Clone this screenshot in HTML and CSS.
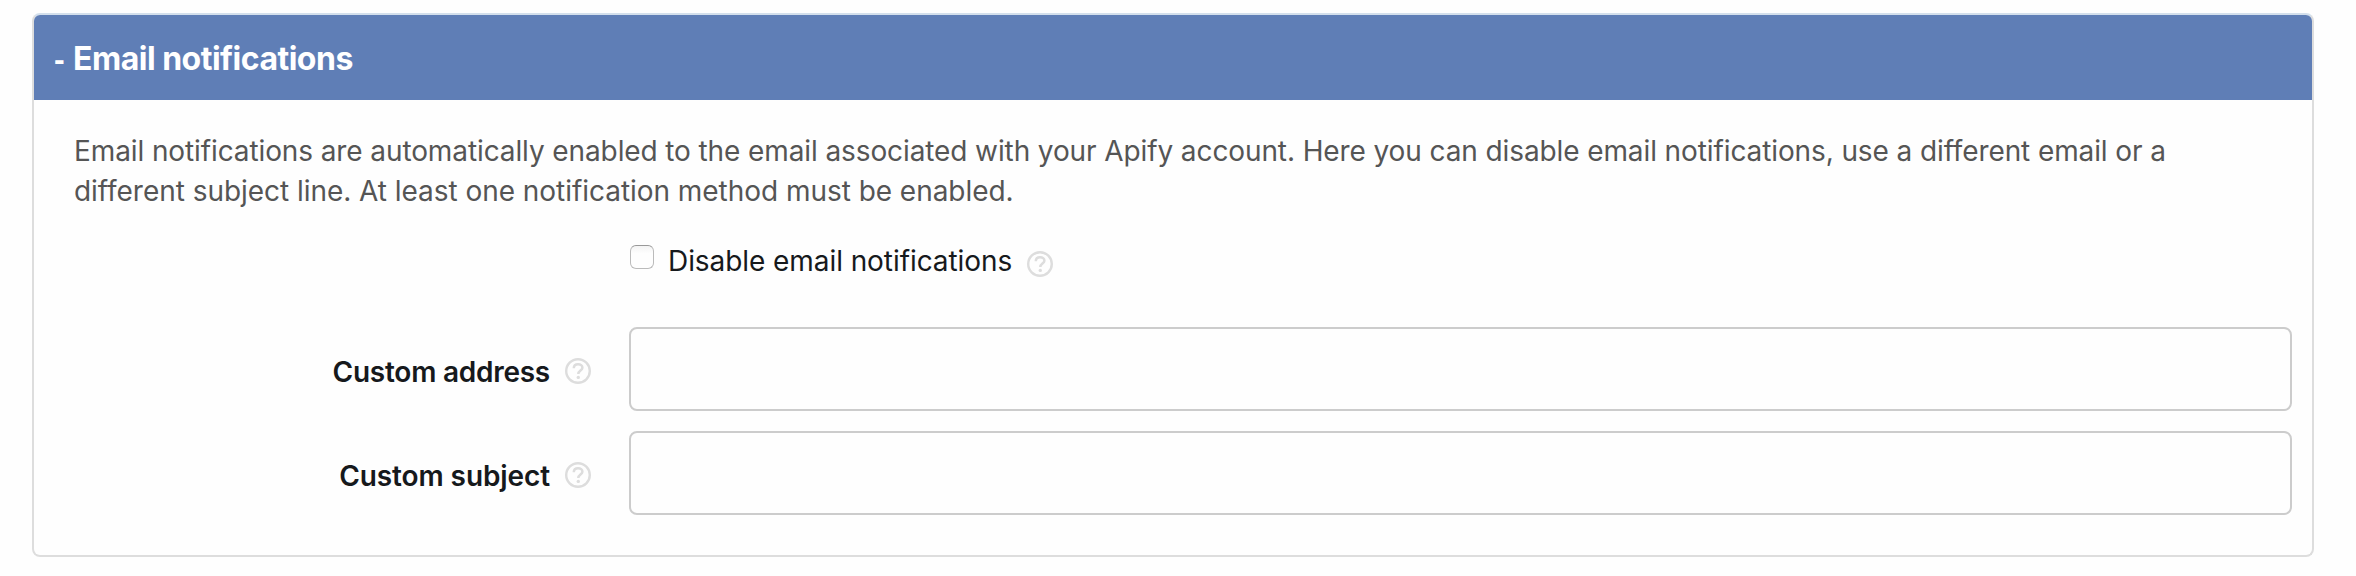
FILE: index.html
```html
<!DOCTYPE html>
<html lang="en">
<head>
<meta charset="utf-8">
<title>Email notifications</title>
<link rel="stylesheet" href="styles.css">
</head>
<body>
<svg class="defs" width="0" height="0">
  <symbol id="help" viewBox="0 0 26 26">
    <circle cx="13" cy="13" r="11.8" fill="none" stroke="currentColor" stroke-width="2.4"/>
    <path d="M8.8 10.2C8.8 7.6 10.7 6.2 13.1 6.2C15.6 6.2 17.4 7.7 17.4 9.7C17.4 12.6 13.3 12.6 13.3 16" fill="none" stroke="currentColor" stroke-width="2.5"/>
    <circle cx="13.3" cy="19.4" r="1.7" fill="currentColor"/>
  </symbol>
</svg>
<section class="panel">
  <header class="panel-header"><span class="toggle">-</span><h2 class="title">Email notifications</h2></header>
  <div class="panel-body">
    <p class="intro"><span class="line-one">Email notifications are automatically enabled to the email associated with your Apify account. Here you can disable email notifications, use a different email or a</span><br><span class="line-two">different subject line. At least one notification method must be enabled.</span></p>
    <div class="check-row">
      <input class="checkbox" type="checkbox" id="disable">
      <label class="check-label" for="disable">Disable email notifications</label>
      <svg class="help"><use href="#help"/></svg>
    </div>
    <div class="field">
      <div class="field-label"><label class="address" for="address">Custom address</label><svg class="help"><use href="#help"/></svg></div>
      <input class="text-input" type="text" id="address">
    </div>
    <div class="field">
      <div class="field-label"><label class="subject" for="subject">Custom subject</label><svg class="help"><use href="#help"/></svg></div>
      <input class="text-input" type="text" id="subject">
    </div>
  </div>
</section>
</body>
</html>
```
FILE: styles.css
```css
* { box-sizing: border-box; }
body {
  margin: 0;
  padding: 13px 42px 19px 32px;
  background: #fefefe;
  color: #16191c;
  font: 28px/40px Inter, "Liberation Sans", sans-serif;
}
.defs { display: block; }
.panel {
  height: 544px;
  border: 2px solid #ddd;
  border-top-color: #d3dfec;
  border-radius: 8px;
  background: #fefefe;
  overflow: hidden;
}
.panel-header {
  display: flex;
  align-items: center;
  height: 85px;
  padding: 2px 0 0 20px;
  background: #5f7eb6;
  color: #fff;
  font-size: 32px;
  font-weight: 600;
}
.toggle { width: 19px; font-family: "Liberation Sans", sans-serif; font-weight: 700; }
.title {
  margin: 0;
  font: inherit;
  font-weight: 700;
  letter-spacing: -0.5px;
  white-space: nowrap;
}
.panel-body { padding: 31px 20px 0 40px; }
.intro {
  margin: 0;
  color: #555;
  white-space: nowrap;
}
.line-one { letter-spacing: -0.105px; }
.line-two { letter-spacing: -0.04px; }
.check-row {
  display: flex;
  align-items: flex-start;
  height: 116px;
  padding: 30px 0 0 555px;
}
.checkbox {
  appearance: none;
  width: 24px;
  height: 24px;
  margin: 4px 14px 0 1px;
  border: 1.5px solid #bbb;
  border-top-color: #999;
  border-radius: 6px;
  background: linear-gradient(#f4f4f4, #fefefe 35%);
}
.check-label { letter-spacing: -0.07px; white-space: nowrap; }
.help {
  flex: none;
  width: 26px;
  height: 26px;
  color: #ddd;
}
.check-row .help { margin: 10px 0 0 15px; }
.field {
  display: flex;
  height: 84px;
  margin-bottom: 20px;
}
.field-label {
  display: flex;
  flex: none;
  justify-content: flex-end;
  width: 517px;
  margin-right: 38px;
  padding-top: 25px;
  font-weight: 600;
  white-space: nowrap;
}
.address { letter-spacing: -0.25px; }
.subject { letter-spacing: -0.1px; }
.field-label .help { margin: 6px 0 0 15px; }
.text-input {
  flex: 1;
  min-width: 0;
  border: 2px solid #ccc;
  border-radius: 8px;
  background: #fefefe;
  padding: 0 16px;
  font: inherit;
}
```
